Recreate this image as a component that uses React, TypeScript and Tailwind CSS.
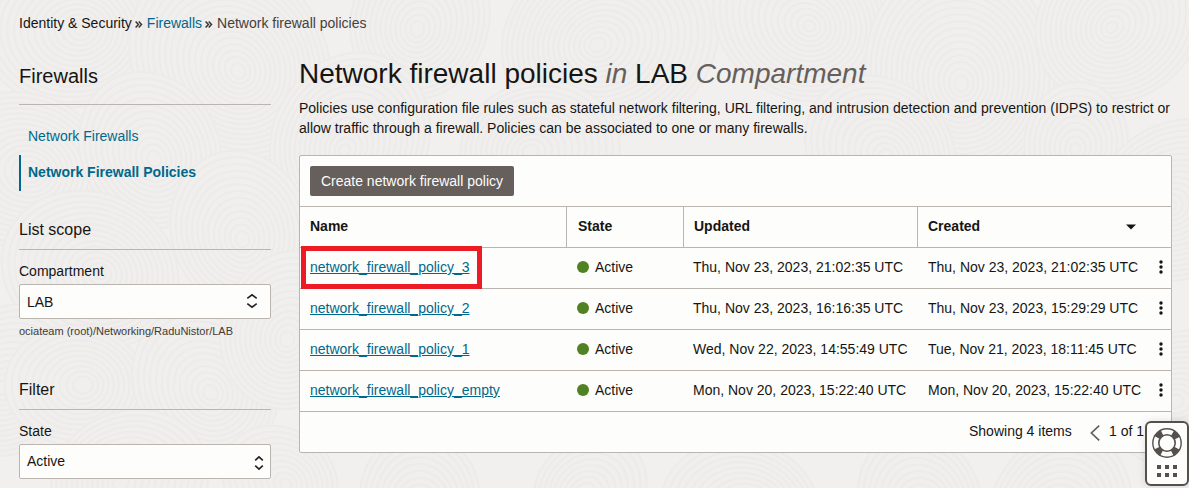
import type { ReactNode } from "react";

const rows = [
  { name: "network_firewall_policy_3", updated: "Thu, Nov 23, 2023, 21:02:35 UTC", created: "Thu, Nov 23, 2023, 21:02:35 UTC", marked: true },
  { name: "network_firewall_policy_2", updated: "Thu, Nov 23, 2023, 16:16:35 UTC", created: "Thu, Nov 23, 2023, 15:29:29 UTC" },
  { name: "network_firewall_policy_1", updated: "Wed, Nov 22, 2023, 14:55:49 UTC", created: "Tue, Nov 21, 2023, 18:11:45 UTC" },
  { name: "network_firewall_policy_empty", updated: "Mon, Nov 20, 2023, 15:22:40 UTC", created: "Mon, Nov 20, 2023, 15:22:40 UTC" },
];

// Centre, outer radius of each ring cluster on the backdrop.
const swirls = [
  [70, 30, 90], [230, 60, 110], [420, 20, 80], [610, 40, 110], [800, 20, 90], [960, 70, 110], [1120, 20, 90],
  [20, 170, 90], [150, 150, 80], [350, 140, 90], [540, 150, 80], [880, 150, 80], [1076, 142, 60], [1180, 200, 90],
  [90, 270, 90], [240, 230, 80], [10, 380, 80], [75, 385, 70], [205, 385, 80], [290, 330, 80], [130, 480, 80],
  [280, 480, 60], [420, 500, 70], [590, 490, 60], [740, 510, 80], [920, 500, 70], [1060, 510, 80], [1185, 400, 80],
];

function Backdrop() {
  return (
    <svg className="absolute inset-0" width="1189" height="488" aria-hidden="true">
      {swirls.map(([cx, cy, size], i) => (
        <g key={i} transform={`rotate(${(i * 53) % 180} ${cx} ${cy})`}>
          <ellipse cx={cx} cy={cy} rx={size} ry={size * 0.86} fill="#f0efed" />
          {Array.from({ length: Math.floor(size / 6) }, (_, k) => (
            <ellipse
              key={k}
              cx={cx + k * 0.8}
              cy={cy}
              rx={size - k * 6}
              ry={(size - k * 6) * 0.86}
              fill="none"
              stroke="#edebe9"
              strokeWidth="2"
            />
          ))}
        </g>
      ))}
    </svg>
  );
}

function Crumb() {
  return (
    <svg className="mt-0.5 shrink-0" width="8" height="7" viewBox="0 0 8 7" fill="none" stroke="#3a3632" strokeWidth="1.5">
      <path d="M.6.6 3.4 3.5.6 6.4M3.7.6l2.8 2.9-2.8 2.9" />
    </svg>
  );
}

function Select({ value, icon, low }: { value: string; icon: ReactNode; low?: boolean }) {
  return (
    <div className="flex h-[35px] items-center justify-between rounded-[2px] border border-[#bab5af] bg-[#fdfdfc] pl-[7px]">
      <span className={low ? "pt-[2px]" : ""}>{value}</span>
      {icon}
    </div>
  );
}

function Section({ title }: { title: string }) {
  return <h3 className="h-[30px] border-b border-[#bab5af] text-[16px] leading-5">{title}</h3>;
}

function Sidebar() {
  return (
    <aside className="w-[252px] shrink-0">
      <h2 className="h-[40px] border-b border-[#bab5af] text-[20px] leading-[22px]">Firewalls</h2>
      <nav className="mt-[14px] text-[#00688c]">
        <a className="block h-9 pl-[9px] leading-[35px]">Network Firewalls</a>
        <a className="block h-9 border-l-2 border-[#00688c] pl-[7px] font-bold leading-[35px]">Network Firewall Policies</a>
      </nav>
      <div className="mt-[29px]">
        <Section title="List scope" />
        <div className="mt-[11px] mb-[3px] leading-5">Compartment</div>
        <Select
          low
          value="LAB"
          icon={
            <svg className="mt-[-2px] mr-[12px]" width="12" height="16" viewBox="0 0 12 16" fill="none" stroke="#24201d" strokeWidth="1.6">
              <path d="M1.3 5.4 6 1.8l4.7 3.6M1.3 10.6 6 14.2l4.7-3.6" />
            </svg>
          }
        />
        <div className="mt-[4px] text-[11px] leading-4 text-[#3f3a36]">ociateam (root)/Networking/RaduNistor/LAB</div>
      </div>
      <div className="mt-[41px]">
        <Section title="Filter" />
        <div className="mt-[11px] mb-[3px] leading-5">State</div>
        <Select
          value="Active"
          icon={
            <svg className="mt-[2px] mr-[6px]" width="10" height="16" viewBox="0 0 10 16" fill="none" stroke="#24201d" strokeWidth="1.6">
              <path d="M1.2 5.4 5 1.8l3.8 3.6M1.2 10.6 5 14.2l3.8-3.6" />
            </svg>
          }
        />
      </div>
    </aside>
  );
}

function PolicyTable() {
  const cols = "grid grid-cols-[266px_117px_234px_1fr]";
  return (
    <section className="mt-[17px] h-[298px] rounded-[2px] border border-[#bab5af] bg-[#fdfdfb]">
      <div className="flex h-[50px] items-center pl-[10px]">
        <button className="h-[30px] w-[204px] rounded-[2px] bg-[#665f5b] leading-[30px] text-[#fdfdfb]">Create network firewall policy</button>
      </div>
      <div className={`${cols} h-[41px] border-t border-[#bab5af] font-bold leading-[39px]`}>
        <div className="pl-[10px]">Name</div>
        <div className="border-l border-[#bab5af] pl-[11px]">State</div>
        <div className="border-l border-[#bab5af] pl-[10px]">Updated</div>
        <div className="flex items-center justify-between border-l border-[#bab5af] pb-[1px] pl-[10px]">
          Created
          <svg className="mr-[35px]" width="10" height="6" viewBox="0 0 10 6" fill="#161513">
            <path d="M0 .5h10L5 5.5Z" />
          </svg>
        </div>
      </div>
      {rows.map((row) => (
        <div
          key={row.name}
          className={`${cols} relative h-[41px] border-t border-[#bab5af] leading-[39px] ${row.marked ? "z-10" : ""}`}
        >
          <div className="pl-[10px]">
            <a className="text-[#00688c] underline">{row.name}</a>
            {row.marked && <span className="absolute -top-[2px] left-[1px] h-[43px] w-[181px] border-[5px] border-[#ed1c24]" />}
          </div>
          <div className="flex items-center pb-[1px] pl-[11px]">
            <span className="mr-[6px] mb-[1px] size-[12px] rounded-full bg-[#508223]" />
            Active
          </div>
          <div className="pl-[10px]">{row.updated}</div>
          <div className="flex items-center justify-between pb-[1px] pl-[11px]">
            {row.created}
            <svg className="mr-[8px] mb-[1px]" width="4" height="14" viewBox="0 0 4 14" fill="#161513">
              <circle cx="2" cy="2" r="1.7" />
              <circle cx="2" cy="7" r="1.7" />
              <circle cx="2" cy="12" r="1.7" />
            </svg>
          </div>
        </div>
      ))}
      <div className="flex h-[41px] items-center border-t border-[#bab5af] pb-[1px] pl-[669px] leading-[39px]">
        <span className="w-[121px]">Showing 4 items</span>
        <svg className="mt-[3px] mr-[9px]" width="10" height="16" viewBox="0 0 10 16" fill="none" stroke="#665f5b" strokeWidth="1.7">
          <path d="M9.2.6 1.4 8l7.8 7.4" />
        </svg>
        <span>1 of 1</span>
      </div>
    </section>
  );
}

function HelpWidget() {
  return (
    <div className="absolute top-[421px] left-[1145px] z-20 h-[65px] w-[44px] rounded-[6px] border-2 border-[#55504c] bg-[#fdfdfb] shadow-[0_0_8px_rgba(0,0,0,0.12)]">
      <svg width="40" height="61" viewBox="0 0 40 61" fill="none">
        <g stroke="#55504c">
          <circle cx="20" cy="20" r="14.2" strokeWidth="1.4" />
          <circle cx="20" cy="20" r="8.2" strokeWidth="1.6" />
          <circle cx="20" cy="20" r="11.3" strokeWidth="6.2" strokeDasharray="6.8 10.95" strokeDashoffset="-5.48" />
        </g>
        <g fill="#55504c">
          {[10, 18, 26].map((x) => (
            <g key={x}>
              <rect x={x} y="42" width="4" height="4" />
              <rect x={x} y="50" width="4" height="4" />
            </g>
          ))}
        </g>
      </svg>
    </div>
  );
}

export default function App() {
  return (
    <div className="relative h-[488px] w-[1189px] overflow-hidden bg-[#f1f0ee] font-['Liberation_Sans',Arial,sans-serif] text-[14px] text-[#161513]">
      <Backdrop />
      <div className="relative pl-[19px]">
        <div className="flex h-[46px] items-center">
          <span className="mr-[3px]">Identity &amp; Security</span>
          <Crumb />
          <span className="ml-[4px] mr-[3px] text-[#00688c]">Firewalls</span>
          <Crumb />
          <span className="ml-[4px] text-[#45403c]">Network firewall policies</span>
        </div>
        <div className="flex gap-7">
          <div className="pt-[19px]">
            <Sidebar />
          </div>
          <main className="w-[873px] pt-[10px]">
            <h1 className="text-[28px] leading-9">
              Network firewall policies <i className="text-[#665f5b]">in</i> LAB <i className="text-[#665f5b]">Compartment</i>
            </h1>
            <p className="mt-[6px] leading-5">
              Policies use configuration file rules such as stateful network filtering, URL filtering, and intrusion detection and prevention (IDPS) to restrict or allow traffic through a firewall. Policies can be associated to one or many firewalls.
            </p>
            <PolicyTable />
          </main>
        </div>
      </div>
      <HelpWidget />
    </div>
  );
}
